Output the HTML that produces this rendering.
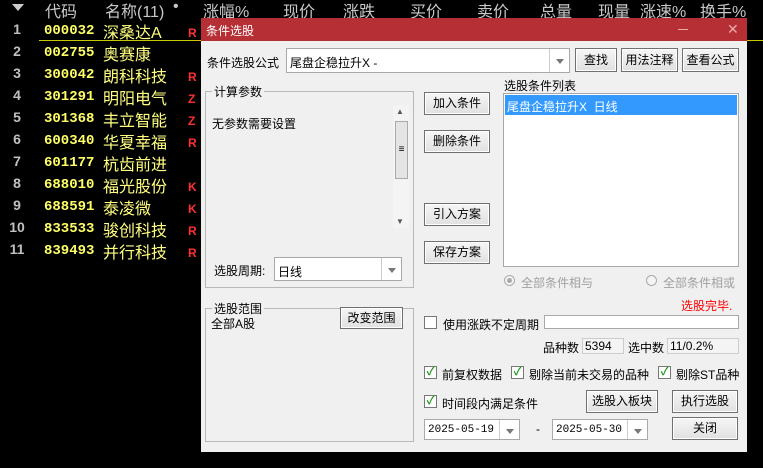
<!DOCTYPE html>
<html><head><meta charset="utf-8"><style>
*{margin:0;padding:0;box-sizing:border-box}
body{width:763px;height:468px;background:#000;position:relative;overflow:hidden;font-family:"Liberation Sans","Noto Sans CJK SC",sans-serif}
.a{position:absolute;white-space:nowrap}
.h{color:#c8c8c8;font-size:16px;top:-2px}
.n{color:#c0c0c0;font-size:14px;font-weight:bold;width:30px;text-align:center;left:2px}
.c{color:#ffff66;font-size:14px;font-weight:bold;left:44px;font-family:"Liberation Mono",monospace;margin-top:2px}
.m{color:#ffff80;font-size:16px;left:103px}
.f{color:#ff3030;font-size:12px;font-weight:bold;left:188px}
#d{position:absolute;left:201px;top:18px;width:546px;height:434px;background:#f0f0f0;font-size:12px;color:#000}
#d .a{font-size:12px}
.btn{position:absolute;background:linear-gradient(#f6f6f6,#e0e0e0);border:1px solid #707070;box-shadow:inset 0 0 0 1px #fff;font-size:12px;text-align:center}
.box{position:absolute;background:#fff;border:1px solid #a8a8a8}
.grp{position:absolute;border:1px solid #b8b8b8}
.gl{position:absolute;background:#f0f0f0;padding:0 2px;font-size:12px}
.dd{position:absolute;right:0;top:0;bottom:0;width:20px;border-left:1px solid #ccc}
.dd:after{content:"";position:absolute;left:6px;top:45%;border:4px solid transparent;border-top:5px solid #777}
.cb{position:absolute;width:13px;height:13px;border:1px solid #777;background:#fff;font-size:11px;color:#1a9a1a;line-height:11px;text-align:center;font-weight:bold}
.ro{position:absolute;background:#f4f4f4;border:1px solid #ccc;font-size:12px;padding-left:2px;line-height:14px}
.rd{position:absolute;width:11px;height:11px;border:1px solid #aaa;border-radius:50%;background:#f4f4f4}
</style></head><body>
<div class="a" style="left:12px;top:4px;border:6px solid transparent;border-top:7px solid #ccc"></div>
<div class="a h" style="left:45px">代码</div>
<div class="a h" style="left:105px">名称(11)</div>
<div class="a h" style="left:173px">•</div>
<div class="a h" style="left:203px">涨幅%</div>
<div class="a h" style="left:283px">现价</div>
<div class="a h" style="left:343px">涨跌</div>
<div class="a h" style="left:410px">买价</div>
<div class="a h" style="left:477px">卖价</div>
<div class="a h" style="left:540px">总量</div>
<div class="a h" style="left:598px">现量</div>
<div class="a h" style="left:640px">涨速%</div>
<div class="a h" style="left:700px">换手%</div>
<div class="a" style="left:39px;top:40px;width:724px;height:1px;background:#c8c800"></div>

<div class="a n" style="top:21px">1</div><div class="a c" style="top:21px">000032</div><div class="a m" style="top:19px">深桑达A</div><div class="a f" style="top:26px">R</div>
<div class="a n" style="top:43px">2</div><div class="a c" style="top:43px">002755</div><div class="a m" style="top:41px">奥赛康</div>
<div class="a n" style="top:65px">3</div><div class="a c" style="top:65px">300042</div><div class="a m" style="top:63px">朗科科技</div><div class="a f" style="top:70px">R</div>
<div class="a n" style="top:87px">4</div><div class="a c" style="top:87px">301291</div><div class="a m" style="top:85px">明阳电气</div><div class="a f" style="top:92px">Z</div>
<div class="a n" style="top:109px">5</div><div class="a c" style="top:109px">301368</div><div class="a m" style="top:107px">丰立智能</div><div class="a f" style="top:114px">Z</div>
<div class="a n" style="top:131px">6</div><div class="a c" style="top:131px">600340</div><div class="a m" style="top:129px">华夏幸福</div><div class="a f" style="top:136px">R</div>
<div class="a n" style="top:153px">7</div><div class="a c" style="top:153px">601177</div><div class="a m" style="top:151px">杭齿前进</div>
<div class="a n" style="top:175px">8</div><div class="a c" style="top:175px">688010</div><div class="a m" style="top:173px">福光股份</div><div class="a f" style="top:180px">K</div>
<div class="a n" style="top:197px">9</div><div class="a c" style="top:197px">688591</div><div class="a m" style="top:195px">泰凌微</div><div class="a f" style="top:202px">K</div>
<div class="a n" style="top:219px">10</div><div class="a c" style="top:219px">833533</div><div class="a m" style="top:217px">骏创科技</div><div class="a f" style="top:224px">R</div>
<div class="a n" style="top:241px">11</div><div class="a c" style="top:241px">839493</div><div class="a m" style="top:239px">并行科技</div><div class="a f" style="top:246px">R</div>

<div id="d">
<div class="a" style="left:0;top:0;width:546px;height:23px;background:#b52f35"></div>
<div class="a" style="left:5px;top:4px;color:#fff">条件选股</div>
<div class="a" style="left:477px;top:11px;width:10px;height:1px;background:#eaa"></div>
<div class="a" style="left:526px;top:3px;color:#eaa;font-size:14px!important">✕</div>

<div class="a" style="left:6px;top:36px">条件选股公式</div>
<div class="box" style="left:85px;top:30px;width:284px;height:25px"><span class="a" style="left:3px;top:5px">尾盘企稳拉升X -</span><div class="dd"></div></div>
<div class="btn" style="left:374px;top:30px;width:42px;height:24px;line-height:22px">查找</div>
<div class="btn" style="left:420px;top:30px;width:57px;height:24px;line-height:22px">用法注释</div>
<div class="btn" style="left:481px;top:30px;width:57px;height:24px;line-height:22px">查看公式</div>

<div class="grp" style="left:4px;top:73px;width:209px;height:197px"></div>
<div class="gl" style="left:11px;top:65px">计算参数</div>
<div class="a" style="left:11px;top:97px">无参数需要设置</div>
<div class="a" style="left:192px;top:87px;width:16px;height:123px;background:#f4f4f4"></div>
<div class="a" style="left:195px;top:89px;font-size:8px!important;color:#555">▲</div>
<div class="a" style="left:194px;top:103px;width:13px;height:58px;background:#e4e4e4;border:1px solid #aaa;text-align:center;font-size:10px!important;line-height:56px">≡</div>
<div class="a" style="left:195px;top:199px;font-size:8px!important;color:#555">▼</div>
<div class="a" style="left:13px;top:244px">选股周期:</div>
<div class="box" style="left:73px;top:239px;width:128px;height:24px"><span class="a" style="left:3px;top:5px">日线</span><div class="dd"></div></div>

<div class="btn" style="left:223px;top:74px;width:66px;height:23px;line-height:21px">加入条件</div>
<div class="btn" style="left:223px;top:112px;width:66px;height:23px;line-height:21px">删除条件</div>
<div class="btn" style="left:223px;top:185px;width:66px;height:23px;line-height:21px">引入方案</div>
<div class="btn" style="left:223px;top:223px;width:66px;height:23px;line-height:21px">保存方案</div>

<div class="a" style="left:303px;top:59px">选股条件列表</div>
<div class="box" style="left:302px;top:75px;width:236px;height:174px"></div>
<div class="a" style="left:304px;top:77px;width:232px;height:20px;background:#3399ff;color:#fff;padding:3px 0 0 2px">尾盘企稳拉升X&nbsp; 日线</div>
<div class="rd" style="left:303px;top:257px"></div><div class="a" style="left:306px;top:260px;width:5px;height:5px;border-radius:50%;background:#aaa"></div>
<div class="a" style="left:320px;top:256px;color:#a0a0a0">全部条件相与</div>
<div class="rd" style="left:445px;top:257px"></div><div class="a" style="left:462px;top:256px;color:#a0a0a0">全部条件相或</div>

<div class="grp" style="left:4px;top:290px;width:209px;height:134px"></div>
<div class="gl" style="left:11px;top:282px">选股范围</div>
<div class="a" style="left:10px;top:297px">全部A股</div>
<div class="btn" style="left:139px;top:289px;width:63px;height:22px;line-height:20px">改变范围</div>

<div class="a" style="left:480px;top:279px;color:#f00">选股完毕.</div>
<div class="cb" style="left:223px;top:298px"></div>
<div class="a" style="left:242px;top:298px">使用涨跌不定周期</div>
<div class="box" style="left:343px;top:297px;width:195px;height:14px"></div>
<div class="a" style="left:342px;top:321px">品种数</div>
<div class="ro" style="left:381px;top:320px;width:42px;height:16px">5394</div>
<div class="a" style="left:427px;top:321px">选中数</div>
<div class="ro" style="left:466px;top:320px;width:72px;height:16px">11/0.2%</div>

<div class="cb" style="left:223px;top:348px">✓</div><div class="a" style="left:241px;top:348px">前复权数据</div>
<div class="cb" style="left:310px;top:348px">✓</div><div class="a" style="left:328px;top:348px">剔除当前未交易的品种</div>
<div class="cb" style="left:457px;top:348px">✓</div><div class="a" style="left:475px;top:348px">剔除ST品种</div>

<div class="cb" style="left:223px;top:377px">✓</div><div class="a" style="left:241px;top:377px">时间段内满足条件</div>
<div class="btn" style="left:385px;top:372px;width:72px;height:23px;line-height:21px">选股入板块</div>
<div class="btn" style="left:471px;top:372px;width:66px;height:23px;line-height:21px">执行选股</div>
<div class="btn" style="left:471px;top:399px;width:66px;height:23px;line-height:21px">关闭</div>
<div class="box" style="left:223px;top:401px;width:96px;height:21px"><span class="a" style="left:3px;top:4px;font-size:11px!important;font-family:'Liberation Mono',monospace">2025-05-19</span><div class="dd"></div></div>
<div class="a" style="left:335px;top:404px">-</div>
<div class="box" style="left:351px;top:401px;width:96px;height:21px"><span class="a" style="left:3px;top:4px;font-size:11px!important;font-family:'Liberation Mono',monospace">2025-05-30</span><div class="dd"></div></div>
</div>
</body></html>
